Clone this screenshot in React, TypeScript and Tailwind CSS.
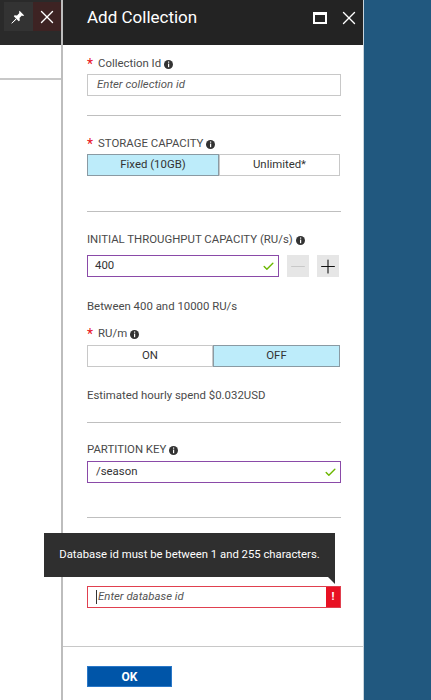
import { Check, Plus, Minus, X } from 'lucide-react';

const font = { fontFamily: 'Roboto, "Open Sans", sans-serif' };

function Info() {
  return (
    <svg width="9" height="9" viewBox="0 0 9 9" className="ml-[3px] shrink-0">
      <circle cx="4.5" cy="4.5" r="4.5" fill="#333" />
      <rect x="4" y="1.5" width="1.2" height="1.2" fill="#fff" />
      <rect x="4" y="3.6" width="1.2" height="3.6" fill="#fff" />
    </svg>
  );
}

function Label({ text, required, className }: { text: string; required?: boolean; className?: string }) {
  return (
    <div className={`flex items-center h-4 text-[11.4px] text-[#4a4a4a] ${className ?? ''}`}>
      {required && <span className="text-[#e81123] mr-[5px] text-[14px] leading-4">*</span>}
      <span>{text}</span>
      <Info />
    </div>
  );
}

function Toggle({ left, right, active }: { left: string; right: string; active: 'left' | 'right' }) {
  const on = 'bg-[#bdecfa] border border-[#8a9aa3]';
  const off = 'bg-white border border-[#c8c8c8]';
  return (
    <div className="flex h-[22px] w-[253px] text-[11.4px] text-[#333]">
      <div className={`flex items-center justify-center ${active === 'left' ? `w-[132px] ${on}` : `w-[126px] ${off}`}`}>{left}</div>
      <div className={`flex items-center justify-center flex-1 ${active === 'right' ? on : off}`}>{right}</div>
    </div>
  );
}

export default function App() {
  return (
    <div className="relative flex h-[700px] w-[431px] overflow-hidden bg-white" style={font}>
      {/* blade behind */}
      <div className="w-[63px] shrink-0 border-r-2 border-[#bdbdbd]">
        <div className="h-[45px] bg-[#2a2a2a] pt-[2px] pl-[4px]">
          <div className="flex h-[29px]">
            <div className="flex w-[29px] items-center justify-center bg-[#333333]">
              <svg width="14" height="14" viewBox="0 0 14 14">
                <path d="M8.6 0.8 L13.2 5.4 L11.9 6 L10.9 5.6 L8.5 8 L8.8 10.4 L7.7 11.2 L2.8 6.3 L3.6 5.2 L6 5.5 L8.4 3.1 L8 2.1 Z" fill="#fff" />
                <path d="M5 8.9 L0.8 13.2 L5.2 9.1 Z" fill="#fff" stroke="#fff" strokeWidth="1" />
              </svg>
            </div>
            <div className="flex w-[29px] items-center justify-center bg-[#3d2323]">
              <X size={22} className="text-white" strokeWidth={1.5} />
            </div>
          </div>
        </div>
        <div className="mt-[33px] h-[2px] bg-[#c8c8c8]" />
      </div>

      {/* add collection panel */}
      <div className="flex w-[300px] shrink-0 flex-col">
        <div className="h-[45px] bg-[#232323] pl-[24px] pr-[3px] pt-[2px] text-white">
          <div className="flex h-[31px] items-center">
            <span className="flex-1 text-[17px] leading-none">Add Collection</span>
            <div className="mr-[11px] h-[12px] w-[14px] border-2 border-t-[3px] border-white" />
            <X size={22} strokeWidth={1.5} />
          </div>
        </div>

        <div className="px-[24px] pt-[11px]">
          <Label text="Collection Id" required />
          <div className="mt-[2px] flex h-[22px] w-[254px] items-center border border-[#c8c8c8] px-[9px] text-[11.4px] italic text-[#555]">
            Enter collection id
          </div>
          <div className="mt-[19px] h-px w-[254px] bg-[#bfbfbf]" />

          <Label text="STORAGE CAPACITY" required className="mt-[20px]" />
          <div className="mt-[2px]">
            <Toggle left="Fixed (10GB)" right="Unlimited*" active="left" />
          </div>
          <div className="mt-[35px] h-px w-[254px] bg-[#bfbfbf]" />

          <Label text="INITIAL THROUGHPUT CAPACITY (RU/s)" className="mt-[20px]" />
          <div className="mt-[7px] flex h-[22px] items-center">
            <div className="flex h-[22px] w-[192px] items-center justify-between border border-[#8a4aa8] pl-[7px] pr-[3px] text-[11.4px] text-[#333]">
              400
              <Check size={13} strokeWidth={2.6} className="text-[#6bb700]" />
            </div>
            <div className="ml-[8px] flex h-[22px] w-[22px] items-center justify-center bg-[#e6e6e6]">
              <Minus size={29} strokeWidth={1.2} className="text-[#c8c8c8]" />
            </div>
            <div className="ml-[8px] flex h-[22px] w-[22px] items-center justify-center bg-[#e6e6e6]">
              <Plus size={29} strokeWidth={1.2} className="text-[#111]" />
            </div>
          </div>
          <div className="mt-[21px] h-4 text-[11.4px] leading-4 text-[#4a4a4a]">Between 400 and 10000 RU/s</div>

          <Label text="RU/m" required className="mt-[12px]" />
          <div className="mt-[3px]">
            <Toggle left="ON" right="OFF" active="right" />
          </div>
          <div className="mt-[20px] h-4 text-[11.4px] leading-4 text-[#4a4a4a]">Estimated hourly spend $0.032USD</div>
          <div className="mt-[19px] h-px w-[254px] bg-[#bfbfbf]" />

          <Label text="PARTITION KEY" className="mt-[19px]" />
          <div className="mt-[3px] flex h-[22px] w-[254px] items-center justify-between border border-[#8a4aa8] pl-[8px] pr-[3px] text-[11.4px] text-[#333]">
            /season
            <Check size={13} strokeWidth={2.6} className="text-[#6bb700]" />
          </div>
          <div className="mt-[34px] h-px w-[254px] bg-[#bfbfbf]" />

          <div className="mt-[68px] flex h-[22px] w-[254px] items-stretch border border-[#e0404f]">
            <div className="flex flex-1 items-center pl-[8px] text-[11.4px] italic text-[#555]">
              <span className="mr-px h-[14px] w-px bg-[#333]" />
              Enter database id
            </div>
            <div className="flex w-[14px] items-center justify-center bg-[#e81123] text-[11px] font-bold text-white">!</div>
          </div>
        </div>

        <div className="mt-[38px] h-px bg-[#c8c8c8]" />
        <div className="px-[24px] pt-[19px]">
          <div className="flex h-[21px] w-[85px] items-center justify-center border border-[#2a78c8] bg-[#0055a8] text-[12px] font-bold text-white">
            OK
          </div>
        </div>
      </div>

      <div className="flex-1 border-l border-[#c8d4dc] bg-[#21587f]" />

      {/* validation tooltip */}
      <div className="absolute left-[44px] top-[533px] flex h-[44px] w-[291px] items-center justify-center bg-[#2f2f2f] text-[11.3px] text-white">
        Database id must be between 1 and 255 characters.
        <div className="absolute right-0 top-full h-0 w-0 border-l-[7px] border-t-[7px] border-l-transparent border-t-[#2f2f2f]" />
      </div>
    </div>
  );
}
